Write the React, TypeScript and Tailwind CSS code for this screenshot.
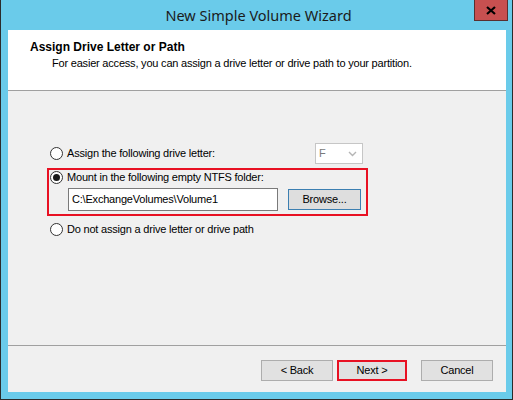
import React from "react";

const font = { fontFamily: '"Liberation Sans", Arial, sans-serif' };

const Radio = ({ checked }: { checked?: boolean }) => (
  <span className="flex h-[13px] w-[13px] shrink-0 items-center justify-center rounded-full border border-[#333333] bg-white">
    {checked && <span className="h-[7px] w-[7px] rounded-full bg-[#1a1a1a]" />}
  </span>
);

const Button = ({ label, w, red }: { label: string; w: string; red?: boolean }) => (
  <div
    className={`${w} flex h-[21px] items-center justify-center bg-[#e1e1e1] text-[11px] tracking-[-0.2px] text-black ${
      red ? "border-2 border-[#e81123]" : "border border-[#adadad]"
    }`}
  >
    {label}
  </div>
);

export default function App() {
  return (
    <div
      style={font}
      className="flex h-[400px] w-[513px] flex-col border-x border-b border-[#2b2b2b] bg-[#6acbea]"
    >
      {/* title bar */}
      <div className="relative flex h-[30px] shrink-0 items-center justify-center">
        <span
          className="pl-[4px] pt-[1px] text-[14.5px] text-[#1b1b1b]"
          style={{ fontFamily: '"Noto Sans", "Open Sans", sans-serif' }}
        >
          New Simple Volume Wizard
        </span>
        <div className="absolute right-[4px] top-0 flex h-[21px] w-[34px] items-center justify-center border border-t-0 border-[#5a2f2f] bg-[#c75050]">
          <svg width="10" height="9" viewBox="0 0 10 9">
            <path d="M1 1 L9 8 M9 1 L1 8" stroke="#000" strokeWidth="2.2" />
          </svg>
        </div>
      </div>

      {/* client area */}
      <div className="mb-[7px] ml-[7px] mr-[6px] flex flex-1 flex-col bg-[#f0f0f0] tracking-[-0.2px]">
        <div className="h-[61px] shrink-0 border-b border-[#a0a0a0] bg-white pl-[22px] pt-[10px]">
          <div className="text-[12px] font-bold leading-[14px] tracking-normal text-black">Assign Drive Letter or Path</div>
          <div className="mt-[3px] pl-[22px] text-[11px] leading-[13px] text-black">
            For easier access, you can assign a drive letter or drive path to your partition.
          </div>
        </div>

        <div className="flex-1 pl-[42px] pt-[52px]">
          <div className="flex h-[21px] items-center">
            <Radio />
            <span className="ml-[4px] w-[248px] text-[11px] text-black">Assign the following drive letter:</span>
            <div className="flex h-[21px] w-[48px] items-center justify-between border border-[#c6c6c6] bg-white pl-[3px] pr-[5px]">
              <span className="text-[11px] text-[#7a7a7a]">F</span>
              <svg width="9" height="6" viewBox="0 0 9 6">
                <path d="M1 1 L4.5 4.5 L8 1" stroke="#b5b5b5" strokeWidth="1.4" fill="none" />
              </svg>
            </div>
          </div>

          <div className="ml-[-3px] mt-[4px] h-[48px] w-[321px] border-2 border-[#e81123] pl-[1px] pt-[1px]">
            <div className="flex h-[13px] items-center">
              <Radio checked />
              <span className="ml-[4px] text-[11px] text-black">Mount in the following empty NTFS folder:</span>
            </div>
            <div className="ml-[18px] mt-[4px] flex items-center">
              <div className="flex h-[23px] w-[210px] items-center border border-[#7a7a7a] bg-white pl-[3px] text-[11px] text-black">
                C:\ExchangeVolumes\Volume1
              </div>
              <div className="ml-[10px] flex h-[21px] w-[73px] items-center justify-center border border-[#3c7fb1] bg-[#dedede] text-[11px] text-black">
                Browse...
              </div>
            </div>
          </div>

          <div className="mt-[7px] flex h-[13px] items-center">
            <Radio />
            <span className="ml-[4px] text-[11px] text-black">Do not assign a drive letter or drive path</span>
          </div>
        </div>

        <div className="flex h-[47px] shrink-0 items-start gap-[4px] border-t border-[#a0a0a0] pl-[253px] pt-[14px]">
          <Button label="< Back" w="w-[72px]" />
          <Button label="Next >" w="w-[70px]" red />
          <div className="ml-[10px]">
            <Button label="Cancel" w="w-[72px]" />
          </div>
        </div>
      </div>
    </div>
  );
}
